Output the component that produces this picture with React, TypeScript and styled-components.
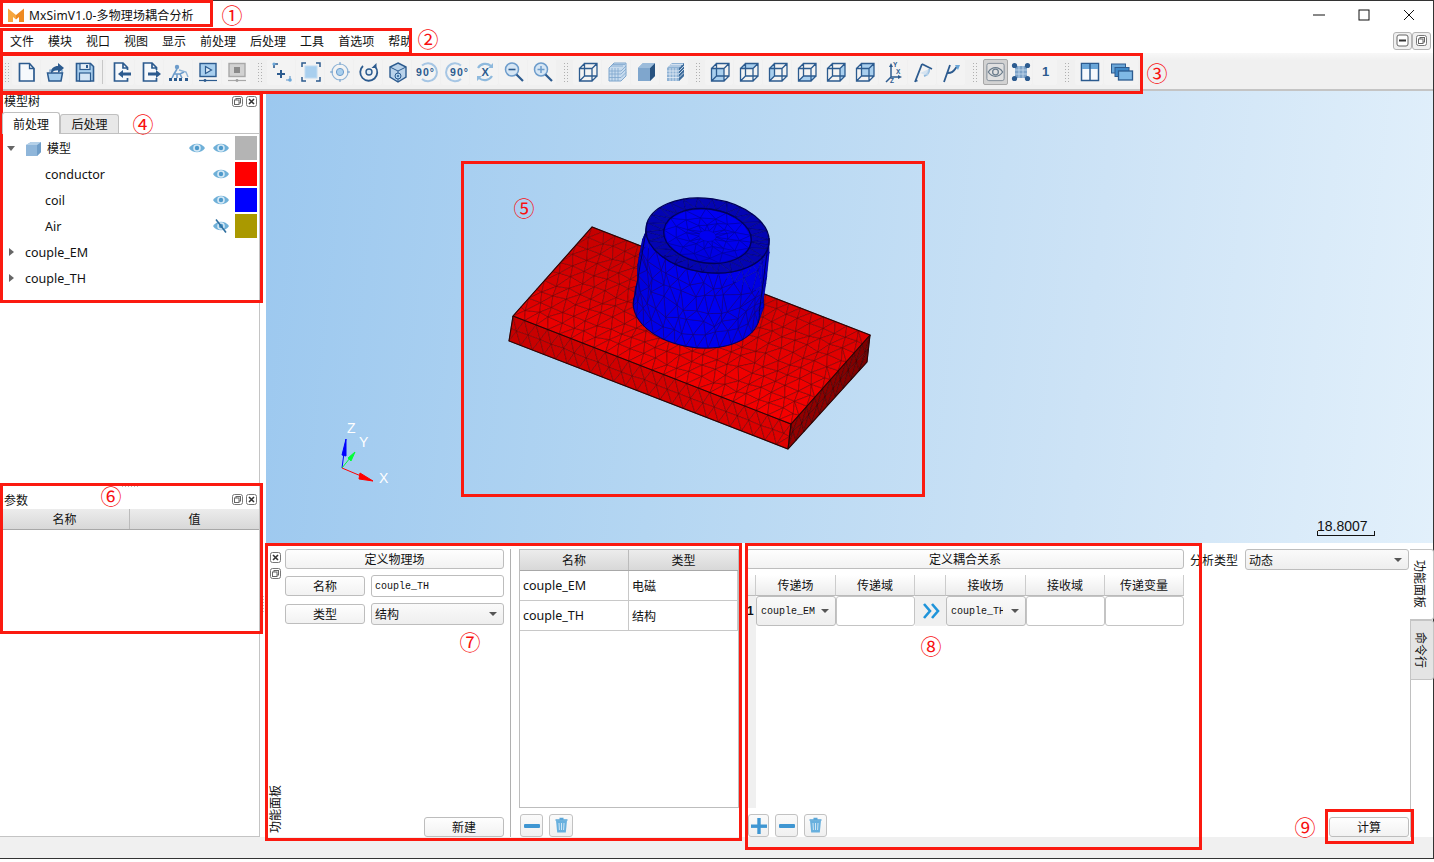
import React from 'react';
import styled, { createGlobalStyle } from 'styled-components';

const FONT = `"Noto Sans","Noto Sans CJK SC",sans-serif`;
const D = '#2c5b8f';
const L = '#a9cfee';
const M = '#6d9ccb';

const Global = createGlobalStyle`
  html, body { margin: 0; padding: 0; width: 1434px; height: 862px; overflow: hidden; background: #fff; }
  * { box-sizing: border-box; }
  body { font-family: ${FONT}; font-size: 12px; color: #111; }
`;

const Win = styled.div`
  position: relative; width: 1434px; height: 859px; display: flex; flex-direction: column;
  border-top: 1px solid #333; border-right: 1px solid #333; border-bottom: 1px solid #333;
  background: #fff;
`;
const TitleBar = styled.div`height: 27px; flex: none; display: flex; align-items: center; padding: 1px 0 0 8px; gap: 5px;`;
const Title = styled.span`font-size: 12px; flex: 1; letter-spacing: .14px;`;
const WinBtns = styled.div`display: flex; height: 26px; align-items: center; justify-content: flex-end; gap: 31px; padding-right: 17px;`;
const MenuBar = styled.div`height: 25px; flex: none; display: flex; align-items: center; padding: 0 2px 0 10px; gap: 14px;`;
const MenuItem = styled.span`font-size: 12px;`;
const MdiGroup = styled.div`margin-left: auto; display: flex;`;
const MdiBtn = styled.div`
  width: 19px; height: 18px; border: 1px solid #b4b4b4; border-radius: 3px; background: #f0f0f0;
  display: flex; align-items: center; justify-content: center;
`;
const ToolBar = styled.div`
  height: 38px; flex: none; display: flex; align-items: center; padding: 1px 0 0 1px;
  background: linear-gradient(#f8f8f8, #f0f0f0 20%); border-bottom: 2px solid #c4c4c4;
`;
const Handle = styled.div<{ $w: number }>`
  width: ${p => p.$w}px; height: 24px; flex: none; display: flex; align-items: center; justify-content: center;
  &::before {
    content: ''; width: 5px; height: 20px;
    background-image: radial-gradient(circle, #b0b0b0 0.8px, transparent 0.9px); background-size: 3px 3px;
  }
`;
const Sep = styled.div`width: 7px; height: 24px; flex: none; display: flex; justify-content: center; &::before { content: ''; width: 1px; background: #c8c8c8; }`;
const TBtn = styled.div<{ $w?: number; $active?: boolean }>`
  width: ${p => p.$w ?? 29}px; height: 26px; flex: none; display: flex; align-items: center; justify-content: center;
  background: ${p => (p.$active ? '#d2d2d2' : '#f3f3f3')};
  border: ${p => (p.$active ? '1px solid #a8a8a8' : '0')}; border-radius: 2px;
  box-shadow: ${p => (p.$active ? 'none' : 'inset -1px 0 0 #f0f0f0')};
`;
const One = styled.span`font: bold 13px "Liberation Sans", sans-serif; color: ${D};`;
const Main = styled.div`height: 746px; flex: none; display: flex;`;
const LeftDock = styled.div`width: 260px; flex: none; display: flex; flex-direction: column; border-right: 1px solid #c4c4c4; border-bottom: 1px solid #c4c4c4;`;
const TreeDock = styled.div`height: 392px; flex: none; display: flex; flex-direction: column;`;
const DockTitle = styled.div`height: 20px; flex: none; display: flex; align-items: center; justify-content: space-between; padding: 0 2px 0 4px; font-size: 12px;`;
const DockIcons = styled.div`display: flex; gap: 3px;`;
const Tabs = styled.div`height: 22px; flex: none; display: flex; align-items: flex-end; padding-left: 2px;`;
const Tab = styled.div<{ $active?: boolean }>`
  width: ${p => (p.$active ? 58 : 59)}px; height: ${p => (p.$active ? 22 : 19)}px; display: flex; align-items: center; justify-content: center;
  border: 1px solid #c0c0c0; border-bottom: 0; border-radius: 3px 3px 0 0;
  background: ${p => (p.$active ? '#fff' : '#e8e8e8')}; font-size: 12px;
  margin-bottom: ${p => (p.$active ? -1 : 0)}px; z-index: ${p => (p.$active ? 1 : 0)};
`;
const TreeFrame = styled.div`flex: 1; margin-left: 1px; border-top: 1px solid #c0c0c0; padding: 1px 0 0 0;`;
const TreeRow = styled.div`height: 26px; display: flex; align-items: center; padding-right: 2px;`;
const TreeLabel = styled.div<{ $pad: number }>`flex: 1; display: flex; align-items: center; padding-left: ${p => p.$pad}px; font-size: 12.5px;`;
const Arrow = styled.span<{ $open?: boolean }>`
  width: 0; height: 0; margin-right: ${p => (p.$open ? 10 : 11)}px; border-style: solid;
  border-width: ${p => (p.$open ? '5px 4px 0 4px' : '4px 0 4px 5px')};
  border-color: ${p => (p.$open ? '#666 transparent transparent transparent' : 'transparent transparent transparent #666')};
`;
const CjkLabel = styled.span`font-size: 12px; margin-left: 5px;`;
const EyeCell = styled.div`width: 24px; display: flex; justify-content: center;`;
const Swatch = styled.div<{ $c: string }>`width: 22px; height: 24px; margin-left: 2px; background: ${p => p.$c};`;
const SplitDots = styled.div`
  height: 6px; flex: none; display: flex; justify-content: center; align-items: center;
  &::before { content: ''; width: 18px; height: 2px; background-image: radial-gradient(circle, #bdbdbd 0.8px, transparent 0.9px); background-size: 3px 2px; }
`;
const ParamDock = styled.div`flex: 1; display: flex; flex-direction: column;`;
const ParamTitle = styled(DockTitle)`padding-top: 1px;`;
const HeadRow = styled.div<{ $cols: string }>`
  display: grid; grid-template-columns: ${p => p.$cols}; height: 21px; flex: none;
  background: linear-gradient(#ececec, #d8d8d8); border-bottom: 1px solid #a8a8a8;
`;
const HeadCell = styled.div`display: flex; align-items: center; justify-content: center; font-size: 12px; border-right: 1px solid #bbb; &:last-child { border-right: 0; }`;
const ParamBody = styled.div`flex: 1; background: #fff;`;
const VSplit = styled.div`
  width: 6px; flex: none; display: flex; align-items: center; justify-content: center; padding-top: 280px;
  &::before { content: ''; width: 2px; height: 18px; background-image: radial-gradient(circle, #c4c4c4 0.8px, transparent 0.9px); background-size: 2px 3px; }
`;
const RightCol = styled.div`flex: 1; display: flex; flex-direction: column; min-width: 0;`;
const Viewport = styled.div`
  height: 452px; flex: none; position: relative; overflow: hidden;
  background: linear-gradient(96deg, #9cc8ef 0%, #b4d6f2 35%, #cde3f6 70%, #e2f0fb 100%);
`;
const Canvas = styled.svg`position: absolute; left: 0; top: 0; width: 1168px; height: 452px;`;
const ScaleBar = styled.div`
  position: absolute; left: 1051px; top: 425px; width: 58px; height: 20px; padding-left: 0;
  border-bottom: 1px solid #111; font: 14px "Liberation Sans", sans-serif; color: #111; line-height: 20px;
  &::before, &::after { content: ''; position: absolute; bottom: 0; width: 1px; height: 4px; background: #111; }
  &::before { left: 0; } &::after { right: 0; }
`;
const BottomPanel = styled.div`flex: 1; margin-top: 2px; display: flex; padding-top: 4px; background: #fff; min-height: 0;`;
const FloatCol = styled.div`width: 19px; flex: none; display: flex; flex-direction: column; align-items: flex-start; padding: 3px 0 4px 4px; gap: 5px;`;
const VertText = styled.div`
  margin-top: auto; writing-mode: vertical-rl; text-orientation: sideways; white-space: nowrap; transform: rotate(180deg);
  font-size: 12px; line-height: 12px; height: 48px; letter-spacing: 0;
`;
const FormCol = styled.div`width: 219px; flex: none; display: flex; flex-direction: column;`;
const QBtn = styled.div<{ $w?: string; $h?: number }>`
  width: ${p => p.$w ?? '100%'}; height: ${p => p.$h ?? 20}px; flex: none; display: flex; align-items: center; justify-content: center;
  font-size: 12px; border: 1px solid #bdbdbd; border-radius: 3px; background: linear-gradient(#fefefe, #f2f2f2);
`;
const FormRow = styled.div`height: 22px; margin-top: 6px; display: flex; align-items: center; gap: 6px; flex: none;`;
const Input = styled.div`
  flex: 1; height: 22px; border: 1px solid #bdbdbd; border-radius: 3px; background: #fff; padding-left: 3px;
  display: flex; align-items: center; font: 10px "Liberation Mono", monospace; 
`;
const Combo = styled.div<{ $mono?: boolean }>`
  flex: 1; height: 100%; display: flex; align-items: center; padding: 0 6px 0 ${p => (p.$mono ? 4 : 3)}px; justify-content: space-between; overflow: hidden;
  border: 1px solid #bdbdbd; border-radius: 3px; background: linear-gradient(#fafafa, #eeeeee); white-space: nowrap;
  font: ${p => (p.$mono ? '10px "Liberation Mono", monospace' : `12px ${FONT}`)};
  &::after { content: ''; flex: none; margin-left: 3px; border-style: solid; border-width: 4px 4px 0 4px; border-color: #555 transparent transparent transparent; }
`;
const ClipText = styled.span<{ $w: number }>`display: block; width: ${p => p.$w}px; overflow: hidden;`;
const BottomRight = styled.div`margin-top: auto; display: flex; justify-content: flex-end;`;
const VLine = styled.div`width: 1px; flex: none; margin: 0 8px 0 6px; background: #b0b0b0;`;
const TableCol = styled.div`width: 220px; flex: none; display: flex; flex-direction: column;`;
const Frame = styled.div`height: 259px; flex: none; border: 1px solid #bdbdbd; display: flex; flex-direction: column;`;
const TblRow = styled.div`display: grid; grid-template-columns: 109px 1fr; height: 30px; border-bottom: 1px solid #c8c8c8;`;
const TblCell = styled.div<{ $cjk?: boolean }>`display: flex; align-items: center; padding-left: 3px; font-size: ${p => (p.$cjk ? 12 : 12.5)}px; border-right: 1px solid #c8c8c8;`;
const IconRow = styled.div<{ $pl: number; $gap: number }>`margin-top: auto; height: 23px; display: flex; gap: ${p => p.$gap}px; padding-left: ${p => p.$pl}px;`;
const IconBtn = styled.div<{ $w: number }>`
  width: ${p => p.$w}px; height: 23px; display: flex; align-items: center; justify-content: center;
  border: 1px solid #c2c2c2; border-radius: 3px; background: linear-gradient(#fafafa, #f0f0f0);
`;
const CoupleCol = styled.div`width: 438px; flex: none; margin-left: 7px; display: flex; flex-direction: column;`;
const CoupleGrid = styled.div`
  margin-top: 6px; height: 233px; flex: none; display: grid;
  grid-template-columns: 10px 80px 79px 31px 80px 79px 79px; grid-template-rows: 21px 30px 1fr;
`;
const CHead = styled.div`display: flex; align-items: center; justify-content: center; font-size: 12px; background: linear-gradient(#ffffff, #ececec); border-right: 1px solid #ccc; border-bottom: 1px solid #bbb; &:last-of-type { border-right: 0; }`;
const RowNo = styled.div`background: #f0f0f0; font: bold 12px "Liberation Sans", sans-serif; display: flex; align-items: center; justify-content: flex-start; padding-left: 1px;`;
const RowFill = styled.div`background: #f0f0f0; grid-column: 1;`;
const CellBox = styled.div`border: 1px solid #c4c4c4; border-radius: 3px; background: #fff;`;
const ArrowCell = styled.div`background: #f0f0f0; display: flex; align-items: center; justify-content: center;`;
const AnalysisCol = styled.div`width: 219px; flex: none; margin-left: 6px; display: flex; flex-direction: column;`;
const AnalysisRow = styled.div`height: 21px; display: flex; align-items: center; flex: none;`;
const AnalysisLabel = styled.span`width: 55px; flex: none; font-size: 12px;`;
const SideTabs = styled.div`flex: 1; margin-left: 1px; border-left: 1px solid #c0c0c0; display: flex; flex-direction: column;`;
const SideTab = styled.div<{ $active?: boolean; $h: number }>`
  height: ${p => p.$h}px; margin-left: -1px; width: 24px; padding-right: 3px; writing-mode: vertical-rl; text-orientation: sideways; white-space: nowrap;
  display: flex; align-items: center; justify-content: center;
  font-size: 12px; border: 1px solid #c4c4c4; border-left: ${p => (p.$active ? '0' : '1px solid #c4c4c4')}; border-radius: 0 3px 3px 0;
  background: ${p => (p.$active ? '#fff' : '#e4e4e4')};
`;
const StatusBar = styled.div`height: 21px; flex: none; background: #f0f0f0;`;
const Box = styled.div<{ $x: number; $y: number; $w: number; $h: number }>`
  position: absolute; left: ${p => p.$x}px; top: ${p => p.$y - 1}px; width: ${p => p.$w}px; height: ${p => p.$h}px;
  border: 3px solid #fb1a10; pointer-events: none;
`;
const Num = styled.span<{ $x: number; $y: number }>`
  position: absolute; left: ${p => p.$x}px; top: ${p => p.$y - 1}px; transform: translate(-50%, -50%);
  font-family: "Noto Sans CJK SC", sans-serif; font-size: 21px; line-height: 1; color: #f81010;
`;

/* ---------- icons ---------- */
const I: React.FC<{ children: React.ReactNode; s?: number; v?: string }> = ({ children, s = 24, v = '0 0 24 24' }) => (
  <svg width={s} height={s} viewBox={v}>{children}</svg>
);
const txt = { fontFamily: '"Liberation Sans",sans-serif', fontWeight: 700 } as const;
const icons: Record<string, React.ReactNode> = {
  newdoc: <><path d="M4.5 3.5h10l4.5 5v12.5H4.5z" fill="#f6f9fc" stroke={D} strokeWidth="1.7" /><path d="M14.5 3.5v5H19" fill="none" stroke={D} strokeWidth="1.3" /></>,
  open: <><path d="M6 12V10h12v5" fill="none" stroke={M} strokeWidth="1.2" /><path d="M3.5 13h15l-1.5 8H5z" fill={L} stroke={D} strokeWidth="1.5" /><path d="M7 13c0-5 3-7 7-7V3l6 5-6 5v-3c-3 0-5 1-6 3z" fill={D} /></>,
  save: <><path d="M3.5 3.5h14l3 3v14.5h-17z" fill={L} stroke={D} strokeWidth="1.6" /><rect x="7" y="3.5" width="10" height="6" fill="#e6eff8" stroke={D} strokeWidth="1.2" /><rect x="6.5" y="13" width="11" height="8" fill="#d4e5f5" stroke={D} strokeWidth="1.2" /><rect x="13" y="5" width="2" height="3" fill={D} /></>,
  imp: <><path d="M18.5 10V7.5l-4.5-4.5H5.5V21h13v-3M14 3.5V8h4.5" fill="#f6f9fc" stroke={D} strokeWidth="1.7" /><path d="M9 14l5-4v2.6h8v2.8h-8V18z" fill={D} /></>,
  exp: <><path d="M18.5 10V7.5l-4.5-4.5H5.5V21h13v-3M14 3.5V8h4.5" fill="#f6f9fc" stroke={D} strokeWidth="1.7" /><path d="M23 14l-5-4v2.6h-8v2.8h8V18z" fill={D} /></>,
  tree: <><circle cx="10" cy="7" r="2.2" fill={M} /><path d="M10 9l-3 5h6l4-2M7 14l-2 4M13 14l2 4M10 14v4" stroke={M} strokeWidth="1.6" fill="none" /><path d="M12 10l7 2 2 5" stroke="#8eb3d6" strokeWidth="1.4" fill="none" /><g fill={D}><rect x="2" y="18" width="3" height="3" /><rect x="7" y="18" width="3" height="3" /><rect x="12" y="18" width="3" height="3" /><rect x="18" y="18" width="3" height="3" /></g></>,
  run: <><rect x="4" y="3.5" width="16" height="13" fill={L} stroke={D} strokeWidth="1.4" /><path d="M9.5 6.5l6 3.5-6 3.5z" fill="#dcebf7" stroke={D} strokeWidth="1.2" /><path d="M3 20.5h18" stroke={D} strokeWidth="1.2" /><circle cx="9" cy="20.5" r="1.4" fill={D} /></>,
  stop: <><rect x="4" y="3.5" width="16" height="13" fill="#d2d2d2" stroke="#a8a8a8" strokeWidth="1.4" /><rect x="9" y="7" width="6" height="6" fill="#8a8a8a" /><path d="M3 20.5h18" stroke="#a8a8a8" strokeWidth="1.2" /><circle cx="12" cy="20.5" r="1.4" fill="#a0a0a0" /></>,
  zsel: <><path d="M4 8V4h4" fill="none" stroke={D} strokeWidth="1.6" /><path d="M15 14h-8M11 10v8" stroke={D} strokeWidth="2" /><path d="M16 20h4v-4" fill="none" stroke="#8eb3d6" strokeWidth="1.6" /><circle cx="20" cy="20" r="1.8" fill="#6aa6d8" /><circle cx="4" cy="4" r="1.6" fill="#6aa6d8" /></>,
  fit: <><rect x="6" y="6" width="12" height="12" fill={L} stroke="#c2dcf2" /><path d="M3 7V3h4M17 3h4v4M21 17v4h-4M7 21H3v-4" fill="none" stroke={D} strokeWidth="1.5" /></>,
  target: <><circle cx="12" cy="12" r="8" fill="none" stroke="#8eb3d6" strokeWidth="1.2" /><circle cx="12" cy="12" r="3.6" fill={L} stroke={M} /><path d="M12 2v3M12 19v3M2 12h3M19 12h3" stroke={M} /></>,
  rotate: <><path d="M18 6.5A8.5 8.5 0 1 1 6 6" fill="none" stroke={D} strokeWidth="1.8" /><path d="M19.5 3v5h-5z" fill={D} /><circle cx="12" cy="12" r="3" fill="#dcebf7" stroke={D} strokeWidth="1.4" /></>,
  boxt: <><path d="M12 3l8 4v10l-8 5-8-5V7z" fill="#b9d2ea" stroke={D} strokeWidth="1.4" /><path d="M4 7l8 4 8-4M12 11v11" stroke={D} fill="none" /><circle cx="12" cy="16" r="3" fill={L} stroke={D} /><circle cx="12" cy="16" r="1" fill={D} /></>,
  r90l: <><path d="M7 5.5A9 9 0 1 1 7 19" fill="none" stroke="#a6c6e4" strokeWidth="2" /><text x="1" y="16" fontSize="10.5" fill={D} style={txt} textLength="18">90°</text></>,
  r90r: <><path d="M17 5.5A9 9 0 1 0 17 19" fill="none" stroke="#a6c6e4" strokeWidth="2" /><text x="6" y="16" fontSize="10.5" fill={D} style={txt} textLength="18">90°</text></>,
  rx: <><path d="M5 8a8.5 8.5 0 0 1 13-2M19 16a8.5 8.5 0 0 1-13 2" fill="none" stroke="#8eb9dd" strokeWidth="2.2" /><path d="M20 3v5h-5zM4 21v-5h5z" fill="#8eb9dd" /><text x="8.5" y="16" fontSize="11" fill={D} style={txt}>X</text></>,
  zout: <><circle cx="10" cy="9.5" r="6.5" fill="#d6e6f4" stroke={M} strokeWidth="1.5" /><path d="M14.5 14.5L21 21" stroke={D} strokeWidth="2.2" /><path d="M6.5 9.5h7" stroke={D} strokeWidth="1.6" /></>,
  zin: <><circle cx="10" cy="9.5" r="6.5" fill="#d6e6f4" stroke={M} strokeWidth="1.5" /><path d="M14.5 14.5L21 21" stroke={D} strokeWidth="2.2" /><path d="M6.5 9.5h7M10 6v7" stroke={M} strokeWidth="1.5" /></>,
  solid: <><path d="M4 8l5-5h12v13l-5 5H4z" fill="#7fa6cd" /><path d="M16 8l5-5v13l-5 5z" fill="#27527f" /><path d="M4 8l5-5h12l-5 5z" fill="#9cbcdb" /></>,
  gridc: <><path d="M4 8l5-5h12v13l-5 5H4z" fill="#c7dbee" stroke="#7fa6cd" /><path d="M4 11h12M4 14h12M4 17.5h12M7 8v13M10 8v13M13 8v13M6 6h12M8 4.5h12M16 11l5-5M16 14l5-5M16 17.5l5-5" stroke="#7fa6cd" strokeWidth=".8" fill="none" /></>,
  grids: <><path d="M4 8l5-5h12v13l-5 5H4z" fill="#8fb2d4" /><path d="M16 8l5-5v13l-5 5z" fill="#3f6d9c" /><path d="M4 11h12M4 14h12M4 17.5h12M7 8v13M10 8v13M13 8v13M6 6h12M8 4.5h12M16 11l5-5M16 14l5-5M16 17.5l5-5" stroke="#e4eef7" strokeWidth=".8" fill="none" /></>,
  axes: <><path d="M9 17V5M9 17h9M9 17l-5 5" stroke={D} strokeWidth="1.5" fill="none" /><path d="M9 3l-2 4h4zM20 17l-4-2v4z" fill={D} /><text x="11" y="7" fontSize="6.5" fill={D} style={txt}>Y</text><text x="14" y="14" fontSize="6.5" fill={D} style={txt}>X</text><text x="8" y="23" fontSize="6.5" fill={D} style={txt}>Z</text></>,
  angle: <><path d="M4 22L11 4M11 4l10 5M5 21l1.5-.5" stroke={D} strokeWidth="1.8" fill="none" /><path d="M13 16a7 7 0 0 0 5-7" stroke="#8eb9dd" strokeWidth="2" fill="none" /><path d="M9 13l9-4-1 7z" fill="#c7dbee" opacity=".7" /></>,
  branch: <><path d="M4 22L10 5M7.5 13c4 0 6-1 9-6" stroke={D} strokeWidth="1.8" fill="none" /><path d="M15 5l5 0-2 5z" fill="#6aa6d8" /></>,
  eyebox: <><rect x="3" y="3" width="18" height="18" rx="2" fill="#e0e0e0" stroke="#7f8b96" /><path d="M4.5 12c4-6 11-6 15 0-4 6-11 6-15 0z" fill="none" stroke="#6a7c8c" strokeWidth="1.3" /><circle cx="12" cy="12" r="3" fill="none" stroke="#6a7c8c" strokeWidth="1.3" /></>,
  nodes: <><rect x="6" y="6" width="12" height="12" fill="#7ea3c8" /><path d="M6 10h12M6 14h12M10 6v12M14 6v12" stroke="#c7dbee" strokeWidth=".8" /><g fill={D}><circle cx="5.5" cy="5.5" r="2.6" /><circle cx="18.5" cy="5.5" r="2.6" /><circle cx="5.5" cy="18.5" r="2.6" /><circle cx="18.5" cy="18.5" r="2.6" /></g></>,
  panels: <><rect x="3.5" y="3.5" width="17" height="17" fill="#f6f9fc" stroke={D} strokeWidth="1.5" /><rect x="4" y="4" width="16" height="5" fill="#6aa6d8" /><path d="M12 3.5v17" stroke={D} strokeWidth="1.5" /></>,
  stack: <><rect x="1.5" y="4" width="14" height="9" fill="#6aa6d8" stroke={D} /><rect x="5" y="7.5" width="14" height="9" fill="#3e88c8" stroke={D} /><rect x="8.5" y="11" width="14" height="9" fill="#7fb9e6" stroke={D} strokeWidth="1.3" /></>,
};
const cube = (face?: string) => {
  const fr = 'M3.5 8.5h12.5v12.5H3.5z', bk = 'M8.5 3.5h12.5v12.5H8.5z';
  const faces: Record<string, string> = {
    front: fr, back: bk,
    top: 'M3.5 8.5l5-5H21l-5 5z', bottom: 'M3.5 21l5-5H21l-5 5z',
    left: 'M3.5 8.5l5-5V16l-5 5z', right: 'M16 8.5l5-5V16l-5 5z',
  };
  return <>{face && <path d={faces[face]} fill={L} />}<path d={`${fr}${bk}M3.5 8.5l5-5M16 8.5l5-5M16 21l5-5M3.5 21l5-5`} fill="none" stroke={D} strokeWidth="1.3" /></>;
};
['front', 'top', 'left', 'bottom', 'right', 'back'].forEach(f => { icons['c_' + f] = cube(f); });
icons.wire = cube();

type Tool = { k: string; w?: number; a?: boolean } | 'h' | 'hh' | 'he' | 'hl' | 's';
const tools: Tool[] = [
  'h', { k: 'newdoc' }, { k: 'open' }, { k: 'save' }, 's', { k: 'imp' }, { k: 'exp' }, { k: 'tree' }, { k: 'run' }, { k: 'stop' },
  'hh', { k: 'zsel' }, { k: 'fit' }, { k: 'target' }, { k: 'rotate' }, { k: 'boxt' }, { k: 'r90l' }, { k: 'r90r' }, { k: 'rx' }, { k: 'zout' }, { k: 'zin' },
  'hh', { k: 'wire' }, { k: 'gridc' }, { k: 'solid' }, { k: 'grids' },
  'hh', { k: 'c_front' }, { k: 'c_top' }, { k: 'c_left' }, { k: 'c_bottom' }, { k: 'c_right' }, { k: 'c_back' }, { k: 'axes' }, { k: 'angle' }, { k: 'branch' },
  'he', { k: 'eyebox', w: 25, a: true }, { k: 'nodes', w: 25 }, { k: 'one', w: 25 },
  'hl', { k: 'panels' }, { k: 'stack', w: 35 },
];
const handleWidth: Record<string, number> = { h: 11, hh: 16, he: 17, hl: 17 };

const FloatIc = () => (
  <I s={11} v="0 0 11 11"><rect x=".5" y=".5" width="10" height="10" rx="2" fill="#fff" stroke="#777" /><rect x="4" y="2.5" width="4.5" height="4.5" fill="none" stroke="#666" /><rect x="2.5" y="4" width="4.5" height="4.5" fill="#fff" stroke="#666" /></I>
);
const CloseIc = () => (
  <I s={11} v="0 0 11 11"><rect x=".5" y=".5" width="10" height="10" rx="2" fill="#fff" stroke="#777" /><path d="M3 3l5 5M8 3l-5 5" stroke="#333" strokeWidth="1.6" /></I>
);
const Eye = ({ off }: { off?: boolean }) => (
  <I s={18} v="0 0 18 18">
    <path d="M1 9C4.5 3.2 13.5 3.2 17 9 13.5 14.8 4.5 14.8 1 9z" fill="#6fb0d8" />
    <circle cx="9" cy="9" r="3.8" fill="#d4e8f5" /><circle cx="9" cy="9" r="2.2" fill="#4f9acb" />
    {off && <path d="M4 2.5l10 13" stroke="#2f6f9f" strokeWidth="1.6" />}
  </I>
);
const TrashIc = () => (
  <I s={17} v="0 0 17 17"><path d="M3 3.5h11l-1.2 12H4.2z" fill="#68b0de" /><path d="M2.5 3h12M6.5 1.5h4" stroke="#5aa6d8" strokeWidth="1.6" /><path d="M6 6l.4 7M8.5 6v7M11 6l-.4 7" stroke="#cfe6f5" /></I>
);
const MinusIc = () => <I s={18} v="0 0 18 18"><rect x="1" y="7" width="16" height="4" rx="1" fill="#3f96d2" /></I>;
const PlusIc = () => <I s={18} v="0 0 18 18"><rect x="1" y="7.5" width="16" height="3.4" fill="#3f96d2" /><rect x="7.3" y="1" width="3.4" height="16" fill="#3f96d2" /></I>;

/* ---------- mesh ---------- */
let seed = 12345;
const rnd = () => { seed = (seed * 16807) % 2147483647; return seed / 2147483647; };
type P = [number, number];
type Tri = { pts: string; fill: string };
function mesh(map: (u: number, v: number) => P, nu: number, nv: number, shade: (u: number, v: number) => string, jit: number): Tri[] {
  const rows: { u: number; p: P }[][] = [];
  for (let j = 0; j <= nv; j++) {
    const v = j / nv; const row: { u: number; p: P }[] = [];
    const odd = j % 2 === 1;
    const n = odd ? nu + 1 : nu;
    for (let i = 0; i <= n; i++) {
      const u = odd ? Math.min(1, Math.max(0, (i - 0.5) / nu)) : i / nu;
      const p = map(u, v);
      const edge = j === 0 || j === nv || u === 0 || u === 1;
      row.push({ u, p: edge ? p : [p[0] + (rnd() - .5) * jit, p[1] + (rnd() - .5) * jit] });
    }
    rows.push(row);
  }
  const out: Tri[] = [];
  const add = (a: P, b: P, c: P, u: number, v: number) => out.push({ pts: `${a[0].toFixed(1)},${a[1].toFixed(1)} ${b[0].toFixed(1)},${b[1].toFixed(1)} ${c[0].toFixed(1)},${c[1].toFixed(1)}`, fill: shade(u, v) });
  for (let j = 0; j < nv; j++) {
    const a = rows[j], b = rows[j + 1]; let i = 0, k = 0;
    while (i < a.length - 1 || k < b.length - 1) {
      const ua = i < a.length - 1 ? a[i + 1].u : 9, ub = k < b.length - 1 ? b[k + 1].u : 9;
      const v = (j + .5) / nv;
      if (ua <= ub) { add(a[i].p, a[i + 1].p, b[k].p, (a[i].u + ua) / 2, v); i++; }
      else { add(a[i].p, b[k + 1].p, b[k].p, (b[k].u + ub) / 2, v); k++; }
    }
  }
  return out;
}
const quad = (a: P, b: P, c: P, d: P) => (u: number, v: number): P => [
  (1 - v) * ((1 - u) * a[0] + u * b[0]) + v * ((1 - u) * d[0] + u * c[0]),
  (1 - v) * ((1 - u) * a[1] + u * b[1]) + v * ((1 - u) * d[1] + u * c[1]),
];
const PHI = 8 * Math.PI / 180;
const ell = (cx: number, cy: number, a: number, b: number, t: number): P => [
  cx + a * Math.cos(t) * Math.cos(PHI) - b * Math.sin(t) * Math.sin(PHI),
  cy + a * Math.cos(t) * Math.sin(PHI) + b * Math.sin(t) * Math.cos(PHI),
];
const pL: P = [513, 316], pF: P = [791, 424], pR: P = [870, 335], pB: P = [592, 227];
const qL: P = [509, 341], qF: P = [788, 449], qR: P = [867, 362];
const T0 = -0.16, T1 = Math.PI + 0.16;
const topMesh = mesh(quad(pL, pF, pR, pB), 24, 10, (u, v) => `rgb(${Math.round(198 + 52 * (.4 * u + .6 * (1 - v)) + rnd() * 8 - 4)},0,0)`, 3.5);
const frontMesh = mesh(quad(pL, pF, qF, qL), 24, 2, (u) => `rgb(${Math.round(198 + 25 * u)},0,0)`, 1.5);
const rightMesh = mesh(quad(pF, pR, qR, qF), 10, 2, (u) => `rgb(${Math.round(150 - 25 * u)},0,0)`, 1.5);
const sideMesh = mesh(
  (u, v) => {
    const t = T0 + (T1 - T0) * (u + Math.sin(2 * Math.PI * u) * 0.04);
    const a = ell(696.3, 309.5, 63.5, 38, t), b = ell(707.5, 235.5, 62, 37, t);
    return [a[0] + (b[0] - a[0]) * v, a[1] + (b[1] - a[1]) * v];
  }, 15, 6, (u) => `rgb(0,0,${Math.round(212 + 28 * Math.sin(u * Math.PI))})`, 7);
const ringMesh = mesh(
  (u, v) => { const t = u * 2 * Math.PI; return ell(707.5, 235.7, 44 + 18 * v, 27 + 10 * v, t); },
  26, 1, () => 'rgb(4,4,178)', 0);
const holeMesh = mesh(
  (u, v) => { const t = u * 2 * Math.PI; const r = .2 + .8 * v; return ell(707.5, 236, 44 * r, 27 * r, t); },
  13, 3, (u, v) => `rgb(0,0,${Math.round(242 - 30 * (v * Math.max(0, Math.sin(u * 2 * Math.PI))))})`, 5);
const outlineEll = (cx: number, cy: number, a: number, b: number) => (
  <ellipse cx={cx} cy={cy} rx={a} ry={b} transform={`rotate(8 ${cx} ${cy})`} fill="none" stroke="#00005a" strokeWidth="1.3" />
);
const Tris = ({ m, stroke, w = .55 }: { m: Tri[]; stroke: string; w?: number }) => (
  <g stroke={stroke} strokeWidth={w}>{m.map((t, i) => <polygon key={i} points={t.pts} fill={t.fill} />)}</g>
);
const sil1 = [ell(696.3, 309.5, 63.5, 38, T0), ell(707.5, 235.5, 62, 37, T0)];
const sil2 = [ell(696.3, 309.5, 63.5, 38, T1), ell(707.5, 235.5, 62, 37, T1)];
const arcPts = Array.from({ length: 41 }, (_, i) => ell(696.3, 309.5, 63.5, 38, T0 + (T1 - T0) * i / 40)).map(p => p.join(',')).join(' ');
const poly = (...p: P[]) => p.map(x => x.join(',')).join(' ');

const Model = () => (
  <Canvas viewBox="266 91 1168 452">
    <Tris m={frontMesh} stroke="#6e0000" />
    <Tris m={rightMesh} stroke="#3c0000" />
    <Tris m={topMesh} stroke="#7a0000" w={.6} />
    <g fill="none" stroke="#2a0505" strokeWidth="1.1">
      <polygon points={poly(pL, pF, pR, pB)} />
      <polyline points={poly(pL, qL, qF, qR, pR)} />
      <path d={`M${pF.join(' ')}L${qF.join(' ')}`} />
    </g>
    <Tris m={sideMesh} stroke="#000088" w={.45} />
    <polyline points={arcPts} fill="none" stroke="#00005a" strokeWidth="1" />
    <path d={`M${sil1[0].join(' ')}L${sil1[1].join(' ')}M${sil2[0].join(' ')}L${sil2[1].join(' ')}`} stroke="#00005a" strokeWidth="1" />
    <Tris m={ringMesh} stroke="#00006a" />
    <ellipse cx={707.5} cy={236} rx={44} ry={27} transform="rotate(8 707.5 236)" fill="#0000f0" />
    <Tris m={holeMesh} stroke="#000090" w={.45} />
    {outlineEll(707.5, 235.5, 62, 37)}
    {outlineEll(707.5, 236, 44, 27)}
    <g strokeWidth="1" fill="none">
      <path d="M342 468L344 453" stroke="#0000ff" />
      <path d="M346 439L342 455L346 456z" fill="#0000ff" stroke="#0000ff" />
      <path d="M342 468L350 458" stroke="#00ff33" />
      <path d="M355 452L348 458L351 461z" fill="#00ff33" stroke="#00ff33" />
      <path d="M342 468L361 476" stroke="#ff0000" />
      <path d="M373 481L360 473L359 479z" fill="#ff0000" stroke="#ff0000" />
    </g>
    <g fill="#fff" fontFamily='"Liberation Sans",sans-serif' fontSize="14">
      <text x="347" y="433">Z</text>
      <text x="359" y="447">Y</text>
      <text x="379" y="483">X</text>
    </g>
  </Canvas>
);

const Logo = () => (
  <I s={16} v="0 0 16 16">
    <path d="M0 1.5L8 8v4.5L5 10v5H0z" fill="#f6a63f" />
    <path d="M16 1.5L8 8v4.5L11 10v5h5z" fill="#ee8a22" />
  </I>
);
const Chevrons = () => (
  <I s={20} v="0 0 20 20"><path d="M3 3l6 7-6 7M11 3l6 7-6 7" fill="none" stroke="#1f94da" strokeWidth="2.6" /></I>
);
const CubeIc = () => (
  <I s={17} v="0 0 17 17"><path d="M1 5l5-3h10v10l-4 4H1z" fill="#8fb6da" /><path d="M12 5l4-3v10l-4 4z" fill="#6f9dc8" /><path d="M1 5l5-3h10l-4 3z" fill="#b4d0e8" /></I>
);

const menu = ['文件', '模块', '视口', '视图', '显示', '前处理', '后处理', '工具', '首选项', '帮助'];
const nums: [string, number, number][] = [['①', 232, 14], ['②', 428, 38], ['③', 1157, 72], ['④', 143, 123], ['⑤', 524, 207], ['⑥', 111, 495], ['⑦', 470, 641], ['⑧', 931, 645], ['⑨', 1305, 826]];
const boxes: [number, number, number, number][] = [[0, 0, 213, 27], [0, 28, 412, 27], [0, 53, 1143, 41], [0, 92, 263, 211], [461, 161, 464, 336], [0, 483, 263, 151], [265, 543, 477, 298], [745, 543, 457, 307], [1325, 809, 89, 35]];

export default function App() {
  return (
    <>
      <Global />
      <Win>
        <TitleBar>
          <Logo />
          <Title>MxSimV1.0-多物理场耦合分析</Title>
          <WinBtns>
            <I s={14} v="0 0 14 14"><path d="M1 7h12" stroke="#111" /></I>
            <I s={14} v="0 0 14 14"><rect x="2" y="2" width="10" height="10" fill="none" stroke="#111" /></I>
            <I s={14} v="0 0 14 14"><path d="M2 2l10 10M12 2L2 12" stroke="#111" /></I>
          </WinBtns>
        </TitleBar>
        <MenuBar>
          {menu.map(m => <MenuItem key={m}>{m}</MenuItem>)}
          <MdiGroup>
            <MdiBtn><I s={13} v="0 0 13 13"><rect x="1" y="1" width="11" height="11" rx="2" fill="#fff" stroke="#666" /><path d="M3 6.5h7" stroke="#333" strokeWidth="2" /></I></MdiBtn>
            <MdiBtn><FloatIc /></MdiBtn>
          </MdiGroup>
        </MenuBar>
        <ToolBar>
          {tools.map((t, i) => {
            if (typeof t === 'string') {
              return t === 's' ? <Sep key={i} /> : <Handle key={i} $w={handleWidth[t]} />;
            }
            return (
              <TBtn key={i} $w={t.w} $active={t.a}>
                {t.k === 'one' ? <One>1</One> : <I>{icons[t.k]}</I>}
              </TBtn>
            );
          })}
        </ToolBar>
        <Main>
          <LeftDock>
            <TreeDock>
              <DockTitle>模型树<DockIcons><FloatIc /><CloseIc /></DockIcons></DockTitle>
              <Tabs><Tab $active>前处理</Tab><Tab>后处理</Tab></Tabs>
              <TreeFrame>
                <TreeRow>
                  <TreeLabel $pad={6}><Arrow $open /><CubeIc /><CjkLabel>模型</CjkLabel></TreeLabel>
                  <EyeCell><Eye /></EyeCell><EyeCell><Eye /></EyeCell><Swatch $c="#b4b4b4" />
                </TreeRow>
                <TreeRow>
                  <TreeLabel $pad={44}>conductor</TreeLabel>
                  <EyeCell><Eye /></EyeCell><Swatch $c="#ff0000" />
                </TreeRow>
                <TreeRow>
                  <TreeLabel $pad={44}>coil</TreeLabel>
                  <EyeCell><Eye /></EyeCell><Swatch $c="#0000ff" />
                </TreeRow>
                <TreeRow>
                  <TreeLabel $pad={44}>Air</TreeLabel>
                  <EyeCell><Eye off /></EyeCell><Swatch $c="#aa9900" />
                </TreeRow>
                <TreeRow><TreeLabel $pad={8}><Arrow />couple_EM</TreeLabel></TreeRow>
                <TreeRow><TreeLabel $pad={8}><Arrow />couple_TH</TreeLabel></TreeRow>
              </TreeFrame>
            </TreeDock>
            <ParamDock>
              <SplitDots />
              <ParamTitle>参数<DockIcons><FloatIc /><CloseIc /></DockIcons></ParamTitle>
              <HeadRow $cols="130px 1fr"><HeadCell>名称</HeadCell><HeadCell>值</HeadCell></HeadRow>
              <ParamBody />
            </ParamDock>
          </LeftDock>
          <VSplit />
          <RightCol>
            <Viewport>
              <Model />
              <ScaleBar>18.8007</ScaleBar>
            </Viewport>
            <BottomPanel>
              <FloatCol>
                <CloseIc /><FloatIc />
                <VertText>功能面板</VertText>
              </FloatCol>
              <FormCol>
                <QBtn>定义物理场</QBtn>
                <FormRow><QBtn $w="80px">名称</QBtn><Input>couple_TH</Input></FormRow>
                <FormRow><QBtn $w="80px">类型</QBtn><Combo>结构</Combo></FormRow>
                <BottomRight><QBtn $w="80px">新建</QBtn></BottomRight>
              </FormCol>
              <VLine />
              <TableCol>
                <Frame>
                  <HeadRow $cols="109px 1fr"><HeadCell>名称</HeadCell><HeadCell>类型</HeadCell></HeadRow>
                  <TblRow><TblCell>couple_EM</TblCell><TblCell $cjk>电磁</TblCell></TblRow>
                  <TblRow><TblCell>couple_TH</TblCell><TblCell $cjk>结构</TblCell></TblRow>
                </Frame>
                <IconRow $pl={1} $gap={6}>
                  <IconBtn $w={23}><MinusIc /></IconBtn>
                  <IconBtn $w={24}><TrashIc /></IconBtn>
                </IconRow>
              </TableCol>
              <CoupleCol>
                <QBtn>定义耦合关系</QBtn>
                <CoupleGrid>
                  <CHead />
                  <CHead>传递场</CHead><CHead>传递域</CHead><CHead /><CHead>接收场</CHead><CHead>接收域</CHead><CHead>传递变量</CHead>
                  <RowNo>1</RowNo>
                  <Combo $mono>couple_EM</Combo>
                  <CellBox />
                  <ArrowCell><Chevrons /></ArrowCell>
                  <Combo $mono><ClipText $w={52}>couple_TH</ClipText></Combo>
                  <CellBox />
                  <CellBox />
                  <RowFill />
                </CoupleGrid>
                <IconRow $pl={2} $gap={6}>
                  <IconBtn $w={21}><PlusIc /></IconBtn>
                  <IconBtn $w={23}><MinusIc /></IconBtn>
                  <IconBtn $w={23}><TrashIc /></IconBtn>
                </IconRow>
              </CoupleCol>
              <AnalysisCol>
                <AnalysisRow><AnalysisLabel>分析类型</AnalysisLabel><Combo>动态</Combo></AnalysisRow>
                <BottomRight><QBtn $w="80px">计算</QBtn></BottomRight>
              </AnalysisCol>
              <SideTabs>
                <SideTab $active $h={71}>功能面板</SideTab>
                <SideTab $h={60}>命令行</SideTab>
              </SideTabs>
            </BottomPanel>
          </RightCol>
        </Main>
        <StatusBar />
        {boxes.map(([x, y, w, h], i) => <Box key={i} $x={x} $y={y} $w={w} $h={h} />)}
        {nums.map(([n, x, y]) => <Num key={n} $x={x} $y={y}>{n}</Num>)}
      </Win>
    </>
  );
}
